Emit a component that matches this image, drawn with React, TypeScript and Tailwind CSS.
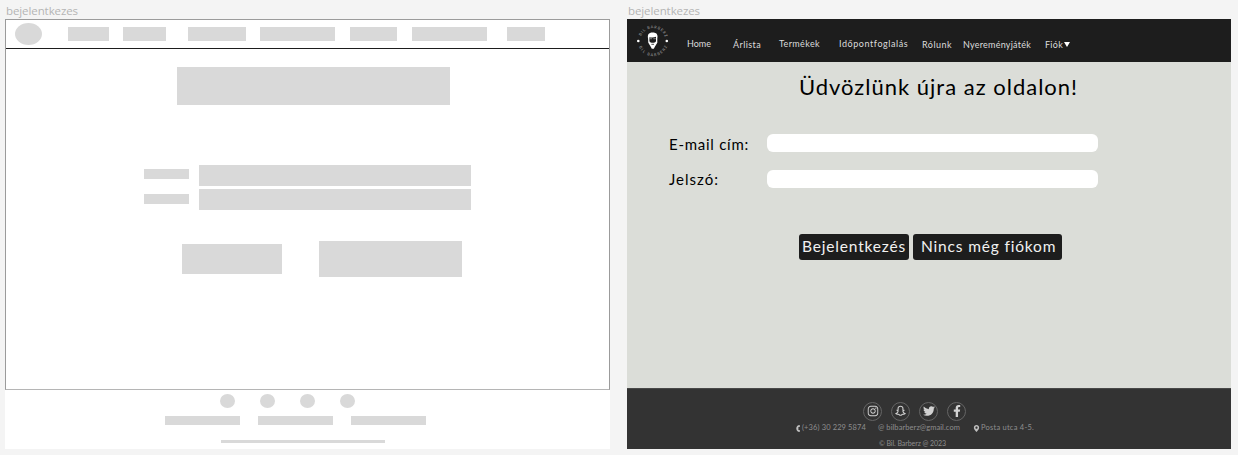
import { useLayoutEffect, useRef, useState } from "react";
import { FaFacebookF, FaInstagram, FaMapMarkerAlt, FaTwitter } from "react-icons/fa";
import { RiSnapchatLine } from "react-icons/ri";

// Spreads a single line of text over the width of its box.
function FitText({ text, className }: { text: string; className: string }) {
  const box = useRef<HTMLSpanElement>(null);
  const line = useRef<HTMLSpanElement>(null);
  const [spacing, setSpacing] = useState(0);
  useLayoutEffect(() => {
    if (box.current && line.current) {
      const free = box.current.getBoundingClientRect().width - line.current.getBoundingClientRect().width;
      setSpacing(free / text.length);
    }
  }, [text]);
  return (
    <span ref={box} className={`block shrink-0 whitespace-nowrap ${className}`}>
      <span ref={line} style={{ letterSpacing: `${spacing}px` }}>{text}</span>
    </span>
  );
}

function Wireframe() {
  const block = "shrink-0 bg-[#d9d9d9]";
  return (
    <section className="w-[605px]">
      <FitText text="bejelentkezes" className="ml-px h-[19px] w-[72px] pt-[3px] font-['Open_Sans',sans-serif] text-[11.5px] leading-4 text-[#b4b4b4]" />
      <div className="h-[371px] border border-[#9b9b9b] border-b-[#b5b5b5] bg-white">
        <nav className="flex h-[29px] items-start border-b border-[#1d1d1d]">
          <div className="ml-[9px] mt-[3px] h-[22px] w-[27px] shrink-0 rounded-[50%] bg-[#d9d9d9]" />
          <div className={`${block} ml-[26px] mt-[7px] h-[14px] w-[41px]`} />
          <div className={`${block} ml-[14px] mt-[7px] h-[14px] w-[43px]`} />
          <div className={`${block} ml-[22px] mt-[7px] h-[14px] w-[58px]`} />
          <div className={`${block} ml-[14px] mt-[7px] h-[14px] w-[75px]`} />
          <div className={`${block} ml-[15px] mt-[7px] h-[14px] w-[47px]`} />
          <div className={`${block} ml-[15px] mt-[7px] h-[14px] w-[75px]`} />
          <div className={`${block} ml-[20px] mt-[7px] h-[14px] w-[38px]`} />
        </nav>
        <div className={`${block} ml-[171px] mt-[18px] h-[38px] w-[273px]`} />
        <div className="ml-[138px] mt-[60px] flex">
          <div className="flex flex-col gap-[15px] pt-1">
            <div className={`${block} h-[10px] w-[45px]`} />
            <div className={`${block} h-[10px] w-[45px]`} />
          </div>
          <div className="ml-[10px] flex flex-col gap-[3px]">
            <div className={`${block} h-[21px] w-[272px]`} />
            <div className={`${block} h-[21px] w-[272px]`} />
          </div>
        </div>
        <div className="ml-[176px] mt-[31px] flex items-center gap-[37px]">
          <div className={`${block} h-[30px] w-[100px]`} />
          <div className={`${block} h-[36px] w-[143px]`} />
        </div>
      </div>
      <footer className="h-[59px] bg-white pt-1">
        <div className="ml-[215px] flex gap-[25px]">
          <div className="h-[14px] w-[15px] rounded-[50%] bg-[#d9d9d9]" />
          <div className="h-[14px] w-[15px] rounded-[50%] bg-[#d9d9d9]" />
          <div className="h-[14px] w-[15px] rounded-[50%] bg-[#d9d9d9]" />
          <div className="h-[14px] w-[15px] rounded-[50%] bg-[#d9d9d9]" />
        </div>
        <div className="ml-[160px] mt-2 flex gap-[18px]">
          <div className={`${block} h-[9px] w-[75px]`} />
          <div className={`${block} h-[9px] w-[75px]`} />
          <div className={`${block} h-[9px] w-[75px]`} />
        </div>
        <div className={`${block} ml-[216px] mt-[15px] h-[3px] w-[164px]`} />
      </footer>
    </section>
  );
}

function Logo() {
  return (
    <svg viewBox="0 0 34 34" className="ml-[9px] mt-[5px] size-[34px] shrink-0">
      <defs>
        <path id="logo-top" d="M4.2 17a12.8 12.8 0 0 1 25.6 0" />
        <path id="logo-bottom" d="M1.8 17a15.2 15.2 0 0 0 30.4 0" />
      </defs>
      <g fill="#a3a3a3" fontFamily="Lato, sans-serif" fontSize="3.8">
        <text><textPath href="#logo-top" startOffset="5" textLength="31">BIL BARBERZ</textPath></text>
        <text><textPath href="#logo-bottom" startOffset="6" textLength="36">BIL BARBERZ</textPath></text>
      </g>
      <circle cx="2.3" cy="17" r="1.3" fill="#fff" />
      <circle cx="30.8" cy="17" r="1.3" fill="#fff" />
      <path fill="#fff" d="M12.1 14.5c-.8-3.8.5-6 4.4-6 4.2 0 5.7 2.1 4.8 6v4.2l-2.3 3.8-1.2 2.2h-2l-1.2-2.2-2.3-3.8Z" />
      <path fill="#1d1d1d" d="M13.4 13.2c1.8.5 4.7.5 6.6-.4v4.5c-1 2-5.5 2-6.6 0Z" />
      <path stroke="#aaa" strokeWidth=".7" d="M13.5 14.7h2.6m1.2 0h2.6" />
      <path stroke="#1d1d1d" strokeWidth=".8" d="M15.4 20.3h2.6" />
    </svg>
  );
}

function LoginPage() {
  const link = "text-[9px] leading-[12px] text-[#dcdcdc]";
  const field = "block h-[18px] w-[331px] rounded-[6px] bg-white outline-none";
  const social = "flex size-[19px] items-center justify-center rounded-full border border-[#656565] pb-[2px] text-[#d2d2d2]";
  return (
    <section className="ml-[17px] w-[604px] font-['Lato',sans-serif]">
      <FitText text="bejelentkezes" className="ml-px h-[19px] w-[72px] pt-[3px] font-['Open_Sans',sans-serif] text-[11.5px] leading-4 text-[#b4b4b4]" />
      <header className="flex h-[43px] items-start bg-[#1d1d1d]">
        <Logo />
        <FitText text="Home" className={`${link} ml-[17px] mt-[19px] w-[24px]`} />
        <FitText text="Árlista" className={`${link} ml-[22px] mt-[20px] w-[28px]`} />
        <FitText text="Termékek" className={`${link} ml-[18px] mt-[19px] w-[41px]`} />
        <FitText text="Időpontfoglalás" className={`${link} ml-[19px] mt-[19px] w-[69px]`} />
        <FitText text="Rólunk" className={`${link} ml-[14px] mt-[20px] w-[30px]`} />
        <FitText text="Nyereményjáték" className={`${link} ml-[11px] mt-[20px] w-[68px]`} />
        <FitText text="Fiók" className={`${link} ml-[14px] mt-[20px] w-[18px]`} />
        <svg viewBox="0 0 6 5" className="ml-px mt-[23px] h-[5px] w-[6px] shrink-0 fill-white"><path d="M0 0h6L3 5Z" /></svg>
      </header>
      <main className="h-[326px] bg-[#dbddd8] pt-[11px] text-black">
        <h1><FitText text="Üdvözlünk újra az oldalon!" className="ml-[172px] h-7 w-[279px] text-[22px] leading-7" /></h1>
        <form className="mt-[33px]">
          <label className="ml-[42px] flex h-[18px] items-start">
            <FitText text="E-mail cím:" className="mt-px w-[80px] text-[15px] leading-[18px]" />
            <input className={`${field} ml-[18px]`} />
          </label>
          <label className="ml-[42px] mt-[18px] flex h-[18px] items-start">
            <FitText text="Jelszó:" className="w-[50px] text-[15px] leading-[18px]" />
            <input type="password" className={`${field} ml-[48px]`} />
          </label>
          <div className="ml-[172px] mt-[46px] flex gap-1 text-[15.5px] leading-[25px] text-[#f1f1f1]">
            <button type="button" className="h-[26px] w-[110px] rounded-[3px] bg-[#1d1d1d] pb-px pl-[3px] text-left">
              <FitText text="Bejelentkezés" className="w-[104px]" />
            </button>
            <button type="button" className="h-[26px] w-[149px] rounded-[3px] bg-[#1d1d1d] pb-px pl-[8px] text-left">
              <FitText text="Nincs még fiókom" className="w-[135px]" />
            </button>
          </div>
        </form>
      </main>
      <footer className="h-[61px] border-t border-[#484848] bg-[#333] pt-[13px] text-[7.5px] leading-[10px] text-[#8e8e8e]">
        <div className="ml-[236px] flex gap-[9px]">
          <div className={social}><FaInstagram size={12} className="shrink-0" /></div>
          <div className={social}><RiSnapchatLine size={13} className="shrink-0" /></div>
          <div className={social}><FaTwitter size={12} className="shrink-0" /></div>
          <div className={social}><FaFacebookF size={12} className="shrink-0" /></div>
        </div>
        <div className="ml-[169px] mt-[2px] flex items-center">
          <svg viewBox="0 0 4 7" className="h-[7px] w-1 shrink-0 fill-[#c0c0c0]"><path d="M3.8 0v2H2.4v3h1.4v2C-.9 7-.9 0 3.8 0Z" /></svg>
          <FitText text="(+36) 30 229 5874" className="ml-[2px] w-[64px]" />
          <FitText text="@ bilbarberz@gmail.com" className="ml-[12px] w-[82px]" />
          <FaMapMarkerAlt size={7} className="ml-[13px] shrink-0 text-[#c0c0c0]" />
          <FitText text="Posta utca 4-5." className="ml-px w-[53px]" />
        </div>
        <FitText text="© Bil. Barberz @ 2023" className="ml-[252px] mt-[5px] w-[67px] text-[7px]" />
      </footer>
    </section>
  );
}

export default function App() {
  return (
    <div className="flex h-[455px] w-[1238px] overflow-hidden bg-[#f4f4f4] pl-[5px]">
      <Wireframe />
      <LoginPage />
    </div>
  );
}
